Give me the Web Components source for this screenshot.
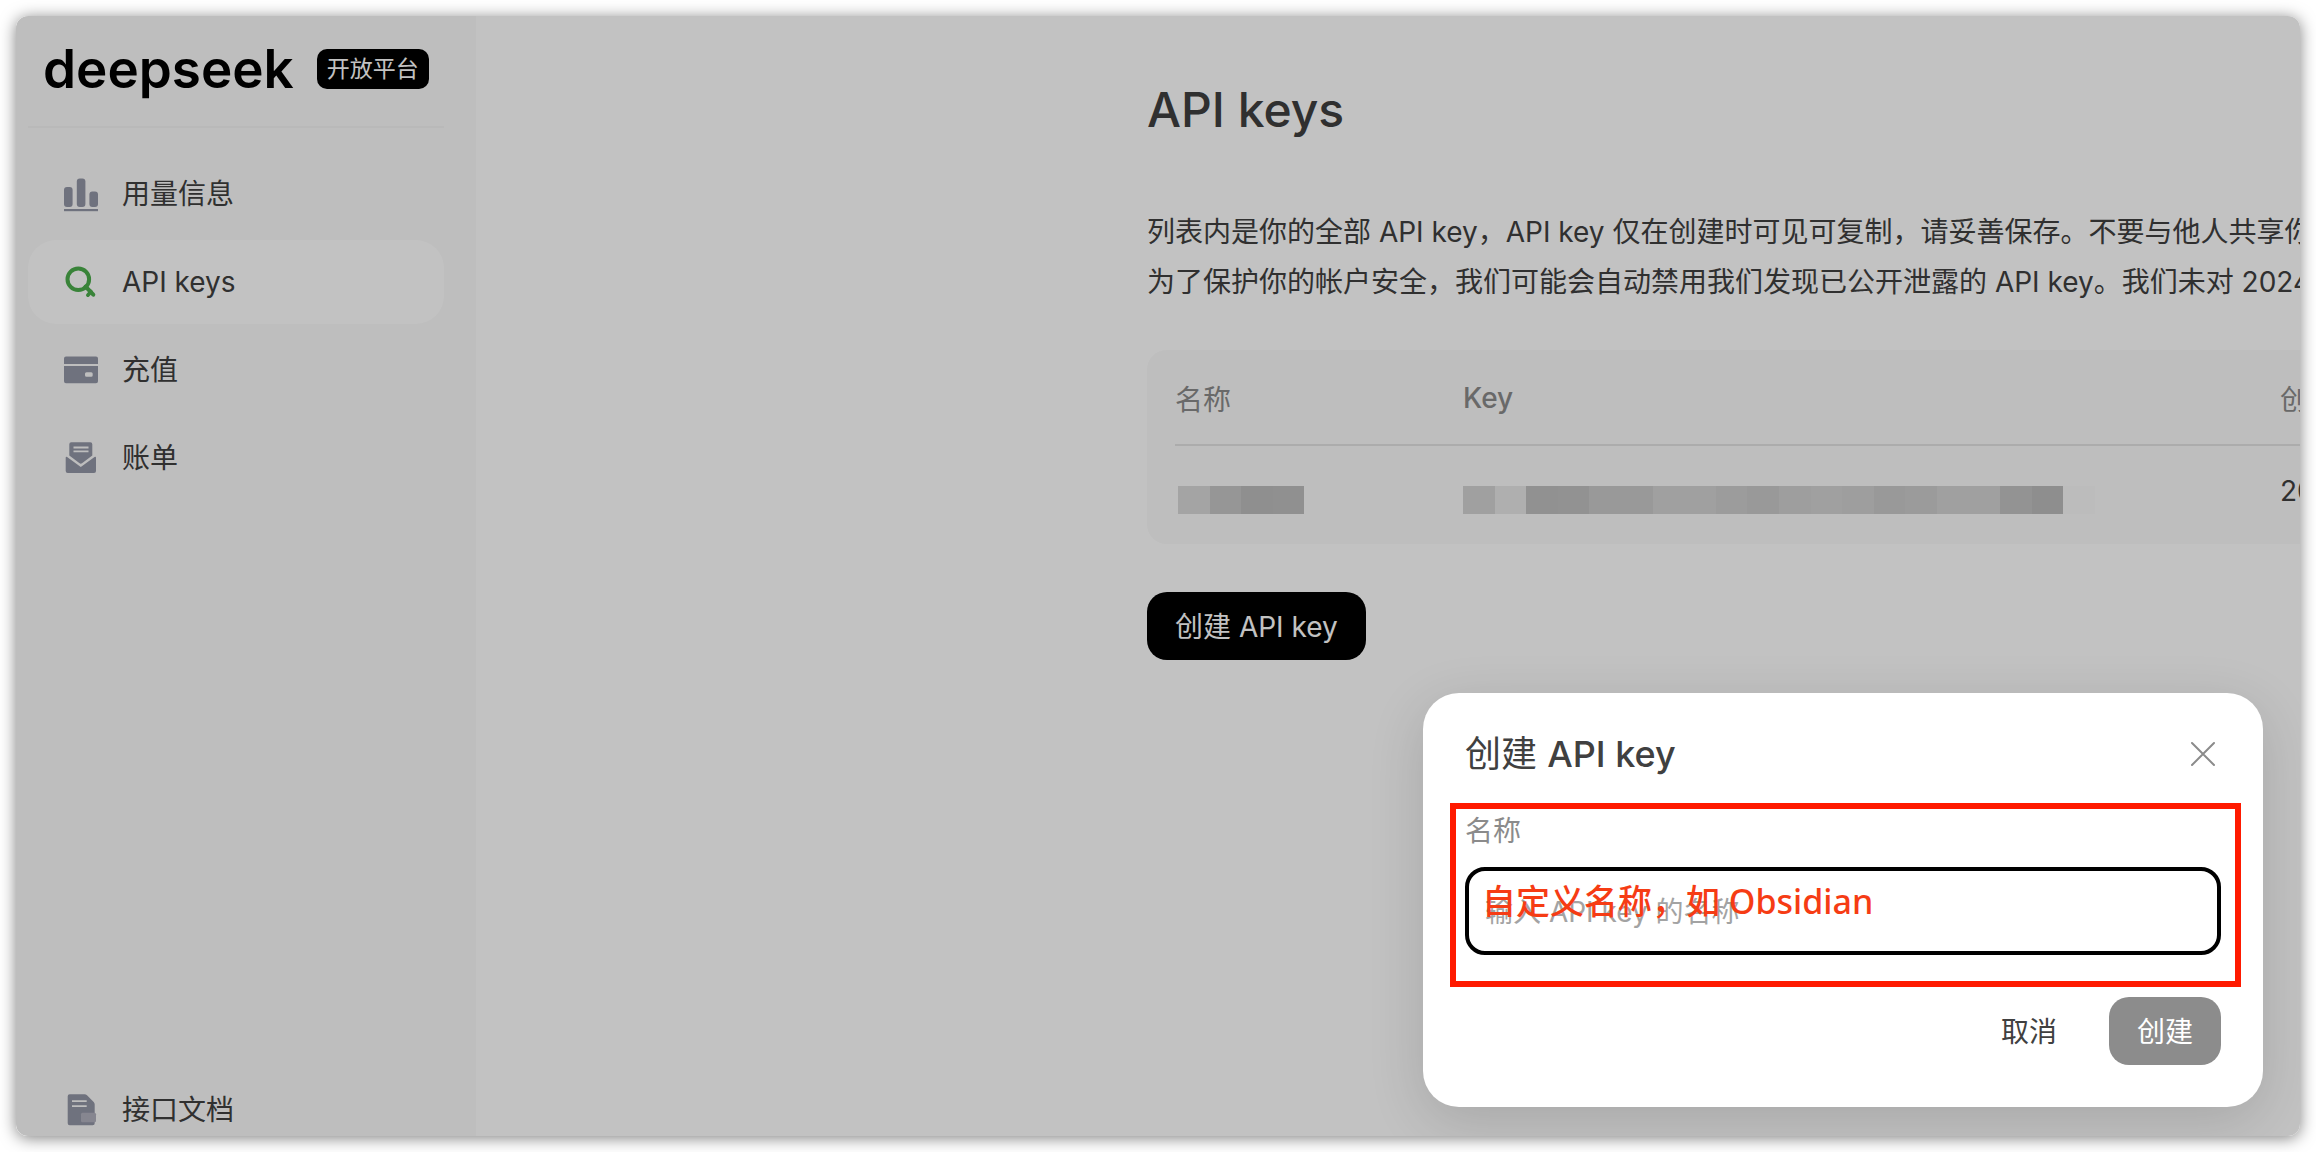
<!DOCTYPE html>
<html lang="zh-CN">
<head>
<meta charset="utf-8">
<title>DeepSeek 开放平台</title>
<style>
  body {
    margin: 0;
    font-family: Inter, "Noto Sans CJK SC", sans-serif;
    font-size: 28px;
    color: #404040;
    background: #fff;
  }
</style>
</head>
<body>
<platform-app>
  <side-bar slot="side">
    <nav-item icon="usage">用量信息</nav-item>
    <nav-item icon="key" active>API keys</nav-item>
    <nav-item icon="wallet">充值</nav-item>
    <nav-item icon="bill">账单</nav-item>
    <nav-item icon="docs" slot="bottom">接口文档</nav-item>
  </side-bar>
  <keys-page></keys-page>
  <create-dialog slot="dialog">创建 <b>API key</b></create-dialog>
</platform-app>

<script>
const icons = {
  usage: `
    <rect x="0" y="10" width="8.6" height="20" rx="3"/>
    <rect x="12.8" y="1.5" width="8.6" height="28.5" rx="3"/>
    <rect x="25.4" y="14.5" width="8.6" height="15.5" rx="3"/>
    <rect x="0" y="32" width="34" height="2.2"/>`,
  key: `
    <g fill="none" stroke="currentColor" stroke-width="4">
      <circle cx="14.3" cy="14.3" r="10.8"/>
      <path d="M21.5 21.5L29.3 29.7" stroke-linecap="round"/>
      <path d="M27 26.5L23.8 30.2" stroke-linecap="round" stroke-width="3.6"/>
    </g>`,
  wallet: `
    <path d="M2 3.5h30a2 2 0 0 1 2 2V11H0V5.5a2 2 0 0 1 2-2z"/>
    <path fill-rule="evenodd" d="M0 13h34v15.2a2 2 0 0 1-2 2H2a2 2 0 0 1-2-2zM22.5 19.3a1.5 1.5 0 0 0-1.5 1.5v1.4a1.5 1.5 0 0 0 1.5 1.5h4.7a1.5 1.5 0 0 0 1.5-1.5v-1.4a1.5 1.5 0 0 0-1.5-1.5z"/>`,
  bill: `
    <path fill-rule="evenodd" d="M7.3 1.3h19a2 2 0 0 1 2 2V14.5L18 22.2a2 2 0 0 1-2.4 0L5.3 14.5V3.3a2 2 0 0 1 2-2zM9.5 5.6v1.8h15V5.6zM9.5 9.4v1.8h15V9.4z"/>
    <path d="M1.7 16.8q0-1.5 1.4-.7L16.8 26 30.5 16.1q1.5-.8 1.5.7V30a2 2 0 0 1-2 2H3.7a2 2 0 0 1-2-2z"/>`,
  docs: `
    <path fill-rule="evenodd" d="M5.7 1.3H20.5q1.5 0 2.5 1L29.7 9q1 1 1 2.5V30.3a2 2 0 0 1-2 2H5.7a2 2 0 0 1-2-2V3.3a2 2 0 0 1 2-2zM8 7.2v1.9h14.7V7.2zM8 12.2v1.9h14.7v-1.9z"/>
    <rect x="17" y="19.7" width="15" height="9.6" rx="1.5" fill="#b1b1be"/>`
};

class PlatformApp extends HTMLElement {
  constructor() {
    super();
    this.attachShadow({ mode: 'open' }).innerHTML = `
      <style>
        :host {
          display: block;
          box-sizing: border-box;
          height: 100vh;
          padding: 16px;
        }

        .window {
          position: relative;
          display: flex;
          height: 100%;
          overflow: hidden;
          border-radius: 12px;
          background: #fff;
        }

        .shadow {
          height: 100%;
          border-radius: 12px;
          box-shadow: 0 2px 16px rgba(0, 0, 0, .5);
        }

        main {
          flex: 1;
          min-width: 0;
          overflow: hidden;
        }

        .mask {
          position: absolute;
          inset: 0;
          display: flex;
          align-items: flex-end;
          justify-content: flex-end;
          padding: 0 37px 29px 0;
          background: rgba(0, 0, 0, .24);
        }
      </style>
      <div class="shadow">
        <div class="window">
          <slot name="side"></slot>
          <main><slot></slot></main>
          <div class="mask"><slot name="dialog"></slot></div>
        </div>
      </div>
    `;
  }
}

class SideBar extends HTMLElement {
  constructor() {
    super();
    this.attachShadow({ mode: 'open' }).innerHTML = `
      <style>
        :host {
          display: flex;
          flex-direction: column;
          flex: none;
          box-sizing: border-box;
          width: 460px;
          padding: 0 32px 0 12px;
          background: #fafafa;
        }

        header {
          display: flex;
          align-items: center;
          gap: 23px;
          height: 106px;
          padding: 0 15px 4px;
          border-bottom: 2px solid #f4f4f4;
        }

        .logo {
          font-size: 53px;
          font-weight: 600;
          line-height: 60px;
          color: #000;
        }

        .badge {
          padding: 0 10px;
          border-radius: 10px;
          background: #000;
          color: #fff;
          font-size: 23px;
          line-height: 40px;
          white-space: nowrap;
        }

        nav {
          display: flex;
          flex-direction: column;
          gap: 4px;
          padding-top: 24px;
        }

        /* the last link runs under the window edge */
        .bottom {
          margin-top: auto;
          margin-bottom: -16px;
        }
      </style>
      <header>
        <span class="logo">deepseek</span>
        <span class="badge">开放平台</span>
      </header>
      <nav><slot></slot></nav>
      <nav class="bottom"><slot name="bottom"></slot></nav>
    `;
  }
}

class NavItem extends HTMLElement {
  constructor() {
    super();
    this.attachShadow({ mode: 'open' }).innerHTML = `
      <style>
        :host {
          display: block;
          line-height: 40px;
        }

        a {
          display: flex;
          align-items: center;
          gap: 24px;
          height: 84px;
          padding: 0 36px;
          border-radius: 28px;
          color: inherit;
          text-decoration: none;
        }

        svg {
          width: 34px;
          height: 34px;
          overflow: visible;
          fill: currentColor;
          color: #9396a6;
        }

        :host([active]) a { background: #fff; }
        :host([active]) svg { color: #4bad4b; }
      </style>
      <a href="#">
        <svg viewBox="0 0 34 34" aria-hidden="true">${icons[this.getAttribute('icon')]}</svg>
        <slot></slot>
      </a>
    `;
  }
}

// row of grey blocks that stands for a hidden value
class MaskedValue extends HTMLElement {
  constructor() {
    super();
    const blocks = this.getAttribute('shades').split(' ')
      .map(s => `<i style="background: #${s}${s}${s}"></i>`).join('');
    this.attachShadow({ mode: 'open' }).innerHTML = `
      <style>
        :host {
          display: flex;
          height: 28px;
          margin-top: 16px;
        }

        i { flex: 1; }
      </style>
      ${blocks}
    `;
  }
}

class KeysPage extends HTMLElement {
  constructor() {
    super();
    this.attachShadow({ mode: 'open' }).innerHTML = `
      <style>
        :host {
          display: block;
          width: max-content;
          padding: 62px 0 0 671px;
        }

        h1 {
          margin: 0 0 65px;
          font-size: 48px;
          font-weight: 500;
          line-height: 64px;
        }

        p {
          margin: 0 0 43px;
          line-height: 50px;
          white-space: nowrap;
        }

        .panel {
          width: 1280px;
          box-sizing: border-box;
          padding: 0 28px;
          border-radius: 20px;
          background: #fafafa;
        }

        table {
          width: 100%;
          table-layout: fixed;
          border-collapse: separate;
          border-spacing: 0;
        }

        th {
          height: 92px;
          padding: 2px 0 0;
          border-bottom: 2px solid #e3e3e3;
          color: #8b8b8b;
          font-weight: 400;
          text-align: left;
        }

        td {
          height: 74px;
          padding: 24px 0 0;
          line-height: 42px;
          vertical-align: top;
        }

        .name { width: 288px; }
        .key { width: 817px; font-weight: 500; }
        .short { width: 126px; margin-left: 3px; }
        .long { width: 632px; }

        button {
          height: 68px;
          margin-top: 48px;
          padding: 0 28px 2px;
          border: 0;
          border-radius: 20px;
          background: #000;
          color: #fff;
          font: inherit;
        }
      </style>
      <h1>API keys</h1>
      <p>列表内是你的全部 API key，API key 仅在创建时可见可复制，请妥善保存。不要与他人共享你<br>为了保护你的帐户安全，我们可能会自动禁用我们发现已公开泄露的 API key。我们未对 2024</p>
      <div class="panel">
        <table>
          <thead>
            <tr><th class="name">名称</th><th class="key">Key</th><th>创建</th></tr>
          </thead>
          <tbody>
            <tr>
              <td><masked-value class="short" shades="d8 c5 bd be"></masked-value></td>
              <td><masked-value class="long" shades="d3 e6 bf c0 c9 ca d3 d3 cd c9 d0 d3 d0 c9 cc d3 d3 c1 bb f7"></masked-value></td>
              <td>2024</td>
            </tr>
          </tbody>
        </table>
      </div>
      <button type="button">创建 API key</button>
    `;
  }
}

class CreateDialog extends HTMLElement {
  constructor() {
    super();
    this.attachShadow({ mode: 'open' }).innerHTML = `
      <style>
        :host {
          display: block;
          box-sizing: border-box;
          width: 840px;
          padding: 37px 42px 42px;
          border-radius: 36px;
          background: #fff;
          box-shadow: 0 14px 56px rgba(0, 0, 0, .14);
        }

        header {
          display: flex;
          align-items: center;
          justify-content: space-between;
          margin-bottom: 33px;
        }

        h2 {
          margin: 0;
          font-size: 36px;
          font-weight: 400;
          line-height: 48px;
        }

        ::slotted(b) { font-weight: 500; }

        button {
          height: 68px;
          padding: 0 28px 2px;
          border: 0;
          border-radius: 20px;
          background: none;
          color: inherit;
          font: inherit;
        }

        .close {
          width: 36px;
          height: 36px;
          padding: 0;
        }

        .close svg {
          display: block;
          stroke: #8b8b8b;
          stroke-width: 2;
          stroke-linecap: round;
        }

        .field {
          position: relative;
          display: flex;
          flex-direction: column;
          gap: 16px;
          margin-bottom: 42px;
        }

        label {
          color: #8b8b8b;
          line-height: 40px;
        }

        input {
          box-sizing: border-box;
          width: 100%;
          height: 88px;
          padding: 2px 16px 0;
          border: 4px solid #000;
          border-radius: 20px;
          outline: 0;
          background: #fff;
          color: inherit;
          font: inherit;
        }

        input::placeholder { color: #a3a3a3; }

        /* red frame and hint drawn over the field */
        .mark {
          position: absolute;
          inset: -8px -20px -32px -15px;
          border: 6px solid #ff1a00;
          pointer-events: none;
        }

        .hint {
          position: absolute;
          left: 17px;
          bottom: 31px;
          color: #f63c14;
          font-family: "Noto Sans", "Noto Sans CJK SC", sans-serif;
          font-size: 34px;
          font-weight: 500;
          line-height: 46px;
          white-space: nowrap;
          pointer-events: none;
        }

        footer {
          display: flex;
          justify-content: flex-end;
          gap: 24px;
        }

        .create {
          background: #8c8c8c;
          color: #fff;
        }
      </style>
      <header>
        <h2><slot></slot></h2>
        <button class="close" type="button" aria-label="关闭">
          <svg width="36" height="36" viewBox="0 0 36 36"><path d="M7 7L29 29M29 7L7 29"/></svg>
        </button>
      </header>
      <div class="field">
        <label for="name">名称</label>
        <input id="name" type="text" placeholder="输入 API key 的名称">
        <div class="mark"></div>
        <div class="hint">自定义名称，如 Obsidian</div>
      </div>
      <footer>
        <button type="button">取消</button>
        <button class="create" type="button">创建</button>
      </footer>
    `;
  }
}

customElements.define('platform-app', PlatformApp);
customElements.define('side-bar', SideBar);
customElements.define('nav-item', NavItem);
customElements.define('masked-value', MaskedValue);
customElements.define('keys-page', KeysPage);
customElements.define('create-dialog', CreateDialog);
</script>
</body>
</html>
